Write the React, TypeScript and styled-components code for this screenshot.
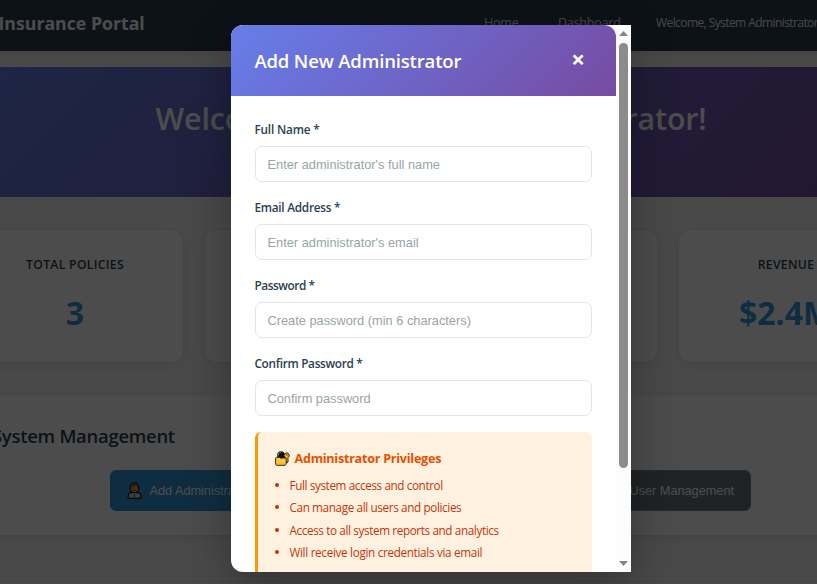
import React from 'react';
import styled, { createGlobalStyle } from 'styled-components';

const ui = '"Open Sans", "Noto Sans", sans-serif';
const control = '"Liberation Sans", Arial, sans-serif';

const GlobalStyle = createGlobalStyle`
  *, *::before, *::after { box-sizing: border-box; }
  body { margin: 0; font-family: ${ui}; background: #f5f5f5; }
  h1, h2, h3, ul, p { margin: 0; padding: 0; }
`;

const Viewport = styled.div`
  width: 100%;
  height: 584px;
  overflow: hidden;
`;

const Page = styled.div`
  position: relative;
  width: 942px;
  height: 584px;
  margin-left: -40px;
  overflow: hidden;
  background: #f6f6f6;
`;

const TopBar = styled.header`
  display: flex;
  align-items: center;
  height: 51px;
  padding: 0 8px 6px 38.5px;
  background: #2c3e50;
  color: #fff;
  box-shadow: 0 2px 8px rgba(0, 0, 0, 0.1);
`;

const Brand = styled.div`
  width: 485.5px;
  font-size: 17.7px;
  font-weight: 700;
  line-height: 24px;
  white-space: nowrap;
`;

const Nav = styled.nav`
  display: flex;
  align-items: center;
  white-space: nowrap;
`;

const NavLink = styled.a<{ $width: number }>`
  width: ${(p) => p.$width}px;
  font-size: 12.5px;
  letter-spacing: -0.2px;
  line-height: 18px;
  opacity: 0.85;
`;

const Greeting = styled.span`
  font-size: 12px;
  letter-spacing: -0.58px;
  line-height: 18px;
  opacity: 0.9;
`;

const Hero = styled.section`
  display: flex;
  justify-content: center;
  height: 130px;
  margin: 16px 8px 0;
  padding-top: 31px;
  background: linear-gradient(135deg, #667eea 0%, #764ba2 100%);
`;

const HeroTitle = styled.h1`
  color: #fff;
  font-size: 30.4px;
  font-weight: 600;
  line-height: 42px;
  letter-spacing: -0.14px;
  white-space: nowrap;
`;

const Stats = styled.section`
  display: grid;
  grid-template-columns: repeat(4, 1fr);
  gap: 22px;
  margin: 33px 8px 0;
`;

const Card = styled.div`
  border-radius: 12px;
  background: #fff;
  box-shadow: 0 4px 16px rgba(0, 0, 0, 0.08), 0 0 0 1px rgba(0, 0, 0, 0.025);
`;

const StatCard = styled(Card)`
  display: flex;
  flex-direction: column;
  align-items: center;
  height: 132px;
  padding: 26px 1px 0 0;
`;

const StatLabel = styled.div`
  color: #2c3e50;
  font-size: 12.2px;
  font-weight: 600;
  line-height: 18px;
  letter-spacing: 0.3px;
`;

const StatValue = styled.div`
  margin-top: 17px;
  color: #3498db;
  font-size: 32px;
  font-weight: 700;
  line-height: 44px;
`;

const Section = styled(Card)`
  height: 140px;
  margin: 33px 8px 0;
  padding: 27px 24px 0;

  & + & { margin-top: 48px; }
`;

const SectionTitle = styled.h2`
  color: #2c3e50;
  font-size: 18.4px;
  font-weight: 600;
  line-height: 28px;
  letter-spacing: -0.24px;
`;

const Actions = styled.div`
  display: flex;
  justify-content: space-between;
  width: 641px;
  margin: 20px 0 0 118px;
`;

const ActionButton = styled.button<{ $tone: 'primary' | 'neutral' }>`
  display: flex;
  align-items: center;
  gap: 7.5px;
  height: 41px;
  padding: 0 16px;
  border: 1px solid ${(p) => (p.$tone === 'primary' ? '#3498db' : '#848d94')};
  border-radius: 6px;
  background: ${(p) => (p.$tone === 'primary' ? '#3498db' : '#6a757d')};
  color: #fff;
  font: 400 12.8px ${control};
  letter-spacing: -0.05px;
  white-space: nowrap;
`;

const Overlay = styled.div`
  position: absolute;
  inset: 0;
  display: flex;
  justify-content: center;
  align-items: flex-start;
  padding-top: 25px;
  background: rgba(0, 0, 0, 0.7);
`;

const Dialog = styled.div`
  display: grid;
  grid-template-columns: 385px 15px;
  width: 400px;
  height: 547px;
  overflow: hidden;
  border-radius: 12px 0 0 12px;
  background: #fff;
  box-shadow: 0 16px 48px rgba(0, 0, 0, 0.3);
`;

const DialogContent = styled.div`
  height: 547px;
  overflow: hidden;
`;

const DialogHeader = styled.div`
  display: flex;
  align-items: center;
  justify-content: space-between;
  height: 71px;
  padding: 0 31px 0 23.4px;
  border-radius: 12px 12px 0 0;
  background: linear-gradient(135deg, #667eea 0%, #764ba2 100%);
  color: #fff;
`;

const DialogTitle = styled.h2`
  font-size: 18.5px;
  font-weight: 600;
  line-height: 28px;
  letter-spacing: -0.16px;
`;

const CloseButton = styled.button`
  padding: 0 0 3px;
  border: 0;
  background: none;
  color: #fff;
  font: 700 24px/24px ${ui};
`;

const Form = styled.form`
  display: flex;
  flex-direction: column;
  padding: 24px 24px 0;
`;

const Field = styled.div`
  height: 78px;
`;

const Label = styled.label<{ $tracking: number }>`
  display: block;
  height: 26px;
  margin-left: -0.6px;
  color: #2c3e50;
  font-size: 11.8px;
  font-weight: 600;
  line-height: 18px;
  letter-spacing: ${(p) => p.$tracking}px;
`;

const Input = styled.input`
  display: block;
  width: 100%;
  height: 36px;
  padding: 0 11.5px;
  border: 1px solid #dfe6ec;
  border-radius: 7px;
  background: #fff;
  font: 400 12.8px ${control};
  outline: 0;

  &::placeholder { color: #98a4a6; opacity: 1; }
`;

const Notice = styled.div`
  height: 170px;
  padding: 16px 16px 0 16.5px;
  border-left: 3px solid #ff9800;
  border-radius: 6px;
  background: #fff1df;
`;

const NoticeTitle = styled.h3`
  display: flex;
  align-items: center;
  gap: 5px;
  height: 20px;
  color: #e65100;
  font-size: 12.6px;
  font-weight: 700;
  letter-spacing: -0.26px;
`;

const NoticeList = styled.ul`
  margin-top: 6px;
  list-style: none;
  color: #bf360c;
`;

const NoticeItem = styled.li<{ $tracking: number }>`
  display: flex;
  align-items: center;
  gap: 11px;
  height: 22.3px;
  font-size: 11.7px;
  letter-spacing: ${(p) => p.$tracking}px;
  white-space: nowrap;

  &::before {
    content: '';
    width: 4px;
    height: 4px;
    border-radius: 50%;
    background: #bf360c;
  }
`;

const Scrollbar = styled.div`
  display: flex;
  flex-direction: column;
  align-items: center;
  justify-content: space-between;
  height: 547px;
  padding: 6px 0;
  background: #fcfcfc;
`;

const Thumb = styled.div`
  width: 9px;
  height: 425px;
  margin-top: 7px;
  border-radius: 5px;
  background: #8b8b8b;
`;

const Track = styled.div`
  flex: 1;
`;

const Arrow = ({ down = false }: { down?: boolean }) => (
  <svg width="9" height="5" viewBox="0 0 9 5" aria-hidden="true">
    <path d={down ? 'M0 0H9L4.5 5Z' : 'M0 5H9L4.5 0Z'} fill="#858585" />
  </svg>
);

const PersonIcon = () => (
  <svg width="15" height="17" viewBox="0 0 15 17" aria-hidden="true">
    <path d="M1.2 16.2V13.4q0-2.6 3.3-2.6h6q3.3 0 3.3 2.6v2.8Z" fill="#d0d0d0" stroke="#000" strokeWidth="1.1" />
    <path d="M5.6 10.4h3.8L7.5 12.8Z" fill="#fff" />
    <path d="M7.5 12V15.6" stroke="#666" strokeWidth="0.9" />
    <rect x="3.2" y="1" width="8.6" height="9.6" rx="4" fill="#eba83e" stroke="#000" strokeWidth="1.1" />
    <path d="M3.8 5.2Q4 1.6 7.5 1.6T11.2 5.2L9 3.6Z" fill="#8a5527" />
    <path d="M5.4 5.8h1M8.6 5.8h1M6.2 8.2h2.6" stroke="#5c3717" strokeWidth="0.9" />
  </svg>
);

const LockIcon = () => (
  <svg width="15" height="15" viewBox="0 0 15 15" aria-hidden="true">
    <path d="M3.2 7V4.2Q3.2 1.2 6 1.2T8.9 4.2V7" fill="#111" stroke="#111" strokeWidth="2" />
    <path d="M3.2 5.6V4.2Q3.2 1.3 6 1.3" fill="none" stroke="#8d949b" strokeWidth="0.8" />
    <path d="M10.2 6.4A2.5 2.5 0 1 1 13 6.6V11l-1.2 1.2-1.2-1.2Z" fill="#f4b321" stroke="#1b1710" strokeWidth="0.9" />
    <circle cx="12" cy="3.9" r="0.6" fill="#1b1710" />
    <path d="M1.4 6.3H4.4L5.2 7H10.4Q11.2 7 11.2 7.6V12.7L10.2 14.3H1.4L.6 13.5V7.1Z" fill="#fdc53a" stroke="#1b1710" strokeWidth="0.9" />
    <path d="M1.3 13.2H10.4" stroke="#e39a1c" strokeWidth="0.8" />
  </svg>
);

const stats = [
  { label: 'TOTAL POLICIES', value: '3' },
  { label: 'ACTIVE USERS', value: '5' },
  { label: 'CLAIMS', value: '2' },
  { label: 'REVENUE', value: '$2.4M' },
];

const fields = [
  { label: 'Full Name *', hint: "Enter administrator's full name", type: 'text', tracking: -0.18 },
  { label: 'Email Address *', hint: "Enter administrator's email", type: 'email', tracking: -0.26 },
  { label: 'Password *', hint: 'Create password (min 6 characters)', type: 'password', tracking: -0.42 },
  { label: 'Confirm Password *', hint: 'Confirm password', type: 'password', tracking: -0.3 },
];

const privileges = [
  { text: 'Full system access and control', tracking: -0.38 },
  { text: 'Can manage all users and policies', tracking: -0.36 },
  { text: 'Access to all system reports and analytics', tracking: -0.37 },
  { text: 'Will receive login credentials via email', tracking: -0.31 },
];

export default function App() {
  return (
    <Viewport>
      <GlobalStyle />
      <Page>
        <TopBar>
          <Brand>Insurance Portal</Brand>
          <Nav>
            <NavLink $width={74}>Home</NavLink>
            <NavLink $width={98}>Dashboard</NavLink>
            <Greeting>Welcome, System Administrator</Greeting>
          </Nav>
        </TopBar>
        <Hero>
          <HeroTitle>Welcome back, System Administrator!</HeroTitle>
        </Hero>
        <Stats>
          {stats.map((s) => (
            <StatCard key={s.label}>
              <StatLabel>{s.label}</StatLabel>
              <StatValue>{s.value}</StatValue>
            </StatCard>
          ))}
        </Stats>
        <Section>
          <SectionTitle>System Management</SectionTitle>
          <Actions>
            <ActionButton $tone="primary">
              <PersonIcon />
              Add Administrator
            </ActionButton>
            <ActionButton $tone="neutral">User Management</ActionButton>
          </Actions>
        </Section>
        <Section />
        <Overlay>
          <Dialog role="dialog" aria-modal="true">
            <DialogContent>
              <DialogHeader>
                <DialogTitle>Add New Administrator</DialogTitle>
                <CloseButton aria-label="Close">×</CloseButton>
              </DialogHeader>
              <Form>
                {fields.map((f) => (
                  <Field key={f.label}>
                    <Label $tracking={f.tracking}>{f.label}</Label>
                    <Input type={f.type} placeholder={f.hint} />
                  </Field>
                ))}
                <Notice>
                  <NoticeTitle>
                    <LockIcon />
                    Administrator Privileges
                  </NoticeTitle>
                  <NoticeList>
                    {privileges.map((p) => (
                      <NoticeItem key={p.text} $tracking={p.tracking}>
                        {p.text}
                      </NoticeItem>
                    ))}
                  </NoticeList>
                </Notice>
              </Form>
            </DialogContent>
            <Scrollbar>
              <Arrow />
              <Track>
                <Thumb />
              </Track>
              <Arrow down />
            </Scrollbar>
          </Dialog>
        </Overlay>
      </Page>
    </Viewport>
  );
}
